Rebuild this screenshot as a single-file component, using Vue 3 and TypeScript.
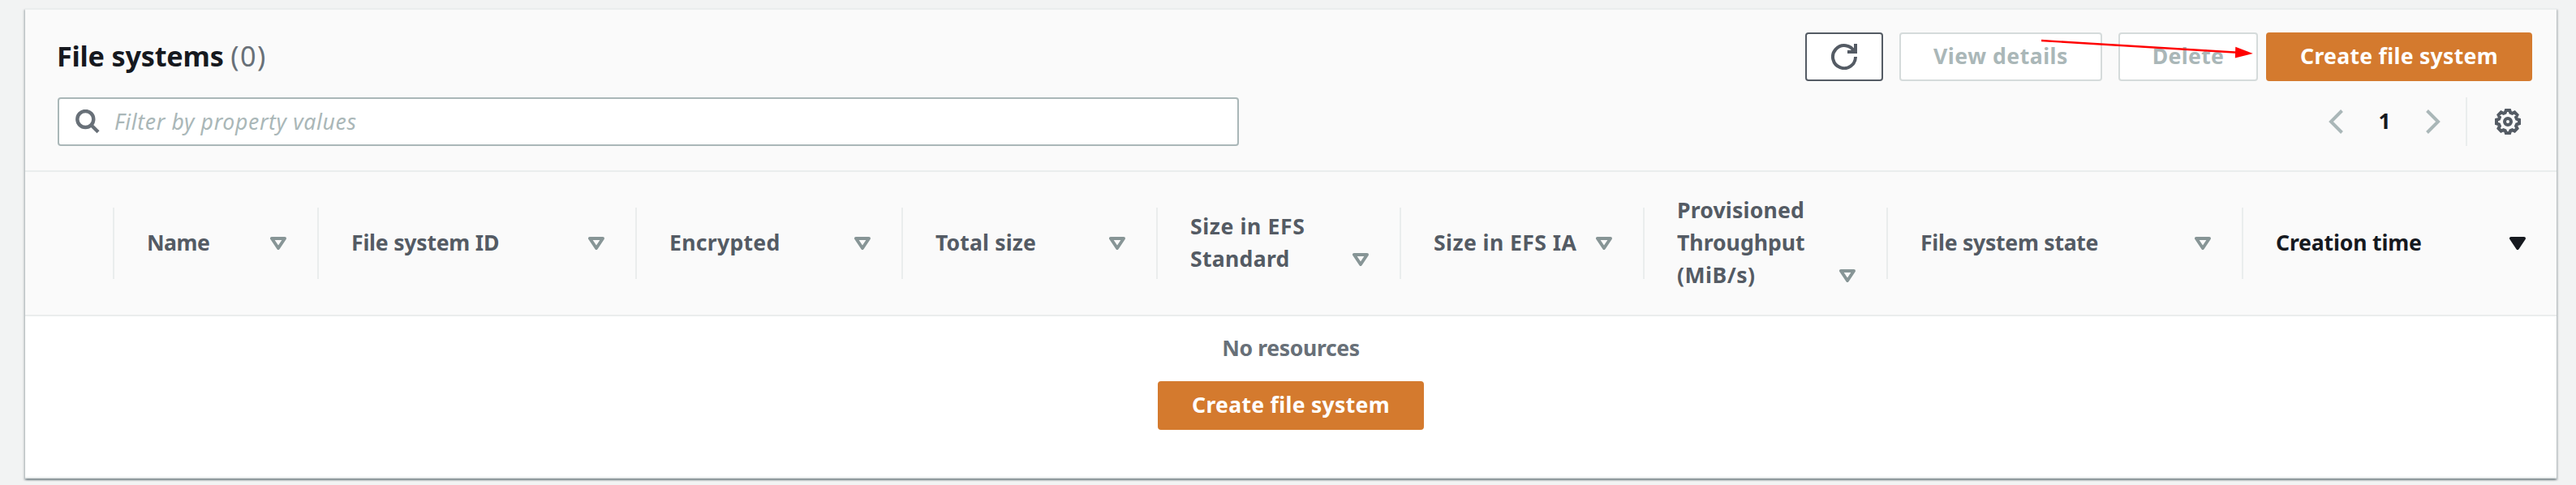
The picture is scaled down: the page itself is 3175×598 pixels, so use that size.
<script setup lang="ts">
interface Line { text: string; spacing: number }
interface Column { id: string; width: number; lines: Line[]; sorted?: boolean }

const columns: Column[] = [
  { id: 'name', width: 252, lines: [{ text: 'Name', spacing: -0.5 }] },
  { id: 'fsid', width: 392, lines: [{ text: 'File system ID', spacing: -0.22 }] },
  { id: 'encrypted', width: 328, lines: [{ text: 'Encrypted', spacing: 0.29 }] },
  { id: 'total', width: 314, lines: [{ text: 'Total size', spacing: 0.13 }] },
  { id: 'standard', width: 300, lines: [{ text: 'Size in EFS', spacing: 0.6 }, { text: 'Standard', spacing: 0.29 }] },
  { id: 'ia', width: 300, lines: [{ text: 'Size in EFS IA', spacing: 0.42 }] },
  {
    id: 'throughput',
    width: 300,
    lines: [
      { text: 'Provisioned', spacing: 0.18 },
      { text: 'Throughput', spacing: 0 },
      { text: '(MiB/s)', spacing: 0.48 },
    ],
  },
  { id: 'state', width: 438, lines: [{ text: 'File system state', spacing: -0.26 }] },
  { id: 'created', width: 386, lines: [{ text: 'Creation time', spacing: -0.17 }], sorted: true },
]

// Gear outline: eight blunt teeth around the centre of a 32-unit box
const polar = (radius: number, degrees: number): string => {
  const a = (degrees * Math.PI) / 180
  return `${(16 + radius * Math.sin(a)).toFixed(2)},${(16 - radius * Math.cos(a)).toFixed(2)}`
}
const gear = Array.from({ length: 8 }, (_, i) => {
  const a = i * 45
  return [polar(14.2, a - 9), polar(14.2, a + 9), polar(11.4, a + 17), polar(11.4, a + 28)].join(' ')
}).join(' ')
</script>

<template>
  <main class="page">
    <section class="panel">
      <header class="header">
        <div class="row">
          <h2 class="title">File systems <span class="count">(0)</span></h2>
          <div class="actions">
            <button class="btn refresh" aria-label="Refresh">
              <svg width="32" height="32" viewBox="0 0 32 32" fill="none" stroke="currentColor" stroke-width="4">
                <path d="M20 10h10V0" />
                <path d="M30 16a14 14 0 1 1-1.4-6" />
              </svg>
            </button>
            <button class="btn disabled view">View details</button>
            <button class="btn disabled delete">Delete</button>
            <button class="btn primary">Create file system</button>
          </div>
        </div>
        <div class="row tools">
          <div class="filter">
            <svg width="30" height="30" viewBox="0 0 30 30" fill="none" stroke="currentColor" stroke-width="4.4">
              <circle cx="12.3" cy="12" r="10" />
              <path d="M19.4 19.2L28 27.8" />
            </svg>
            <span class="placeholder">Filter by property values</span>
          </div>
          <div class="pager">
            <svg class="chev" width="18" height="30" viewBox="0 0 18 30"><path d="M16.5 1.5L3 15l13.5 13.5" /></svg>
            <span class="num">1</span>
            <svg class="chev" width="18" height="30" viewBox="0 0 18 30"><path d="M1.5 1.5L15 15L1.5 28.5" /></svg>
            <span class="gear">
              <svg width="32" height="32" viewBox="0 0 32 32" fill="none" stroke="currentColor" stroke-width="4">
                <polygon :points="gear" />
                <circle cx="16" cy="16" r="4" />
              </svg>
            </span>
          </div>
        </div>
      </header>

      <div class="thead">
        <div class="cell select"></div>
        <div
          v-for="col in columns"
          :key="col.id"
          class="cell"
          :class="{ sorted: col.sorted }"
          :style="{ width: col.width + 'px' }"
        >
          <div class="label">
            <div v-for="line in col.lines" :key="line.text" :style="{ letterSpacing: line.spacing + 'px' }">{{ line.text }}</div>
          </div>
          <svg class="sort" width="20" height="16" viewBox="0 0 20 16"><path d="M2 2H18L10 14Z" /></svg>
        </div>
      </div>

      <div class="empty">
        <div class="none">No resources</div>
        <button class="btn primary">Create file system</button>
      </div>
    </section>

    <svg class="pointer" width="264" height="28" viewBox="0 0 264 28">
      <path d="M0 4L242 18.8" stroke="#f00" stroke-width="2.4" />
      <path d="M239.3 11.8L260.8 20L238.8 25.6Z" fill="#f00" />
    </svg>
  </main>
</template>

<style>
body {
  background: #f2f3f3;
}
</style>

<style scoped>
.page {
  position: relative;
  box-sizing: border-box;
  height: 598px;
  padding: 10px 24px 8px 31px;
  overflow: hidden;
  background: #f2f3f3;
  color: #16191f;
  font-family: "Noto Sans", "Open Sans", sans-serif;
  font-size: 26.6px;
  line-height: 40px;
}
.panel {
  box-sizing: border-box;
  width: 3120px;
  height: 580px;
  border-top: 2px solid #eaeded;
  background: #fff;
  box-shadow: 0 2px 2px 0 rgba(0, 28, 36, 0.3), 2px 2px 2px 0 rgba(0, 28, 36, 0.15), -2px 2px 2px 0 rgba(0, 28, 36, 0.15), inset 0 -2px 0 #eaeded;
}
.header {
  box-sizing: border-box;
  height: 200px;
  padding: 28px 30px 0 40px;
  border-bottom: 2px solid #eaeded;
  background: #fafafa;
}
.row {
  display: flex;
  align-items: center;
  justify-content: space-between;
  height: 60px;
}
.tools {
  margin-top: 20px;
}
.title {
  margin: 0 0 0 -1px;
  padding-bottom: 2px;
  font-size: 34.2px;
  font-weight: 700;
  line-height: 44px;
  letter-spacing: -0.2px;
}
.count {
  color: #687078;
  font-weight: 400;
  letter-spacing: 1.4px;
}
.actions {
  display: flex;
}
.btn {
  box-sizing: border-box;
  display: flex;
  align-items: center;
  justify-content: center;
  height: 60px;
  padding: 0 0 3px;
  border: 2px solid #545b64;
  border-radius: 4px;
  background: #fff;
  color: #545b64;
  font: inherit;
  font-weight: 700;
  white-space: nowrap;
}
.refresh {
  width: 96px;
  padding: 0;
}
.disabled {
  border-color: #d5dbdb;
  color: #aab7b8;
}
.view {
  width: 250px;
  margin-left: 20px;
  letter-spacing: 0.52px;
}
.delete {
  width: 172px;
  margin: 0 10px 0 20px;
  letter-spacing: 0.36px;
}
.primary {
  width: 328px;
  border-color: #d47a2e;
  background: #d47a2e;
  color: #fff;
  letter-spacing: 0.28px;
}
.filter {
  box-sizing: border-box;
  display: flex;
  align-items: center;
  width: 1456px;
  height: 60px;
  padding-left: 20px;
  border: 2px solid #aab7b8;
  border-radius: 4px;
  background: #fff;
  color: #687078;
}
.placeholder {
  margin-left: 18px;
  color: #aab7b8;
  font-style: italic;
  letter-spacing: 0.64px;
}
.pager {
  display: flex;
  align-items: center;
  height: 60px;
}
.chev path {
  fill: none;
  stroke: #aab7b8;
  stroke-width: 4;
}
.num {
  width: 102px;
  padding-bottom: 3px;
  font-weight: 700;
  text-align: center;
}
.gear {
  display: flex;
  align-items: center;
  height: 60px;
  margin-left: 31px;
  padding: 0 14px 0 34px;
  border-left: 2px solid #eaeded;
  color: #545b64;
}
.thead {
  box-sizing: border-box;
  display: flex;
  align-items: center;
  height: 178px;
  border-bottom: 2px solid #eaeded;
  background: #fafafa;
}
.cell {
  box-sizing: border-box;
  flex: none;
  display: flex;
  align-items: center;
  justify-content: space-between;
  height: 88px;
  padding: 0 38px 0 40px;
  border-right: 2px solid #eaeded;
  color: #545b64;
  font-weight: 700;
  white-space: nowrap;
}
.select {
  width: 110px;
  padding: 0;
}
.sorted {
  border-right: 0;
  color: #16191f;
}
.label {
  padding-bottom: 2px;
}
.sort {
  flex: none;
}
.cell:has(.label > :nth-child(2)) .sort {
  margin-top: 40px;
}
.cell:has(.label > :nth-child(3)) .sort {
  margin-top: 80px;
}
.sort path {
  fill: none;
  stroke: #879596;
  stroke-width: 4;
  stroke-linejoin: round;
}
.sorted .sort path {
  fill: #16191f;
  stroke: #16191f;
}
.empty {
  display: flex;
  flex-direction: column;
  align-items: center;
  padding-top: 19px;
}
.none {
  margin-bottom: 21px;
  color: #687078;
  font-weight: 700;
  letter-spacing: -0.37px;
}
.pointer {
  position: absolute;
  left: 2516px;
  top: 46px;
}
</style>
